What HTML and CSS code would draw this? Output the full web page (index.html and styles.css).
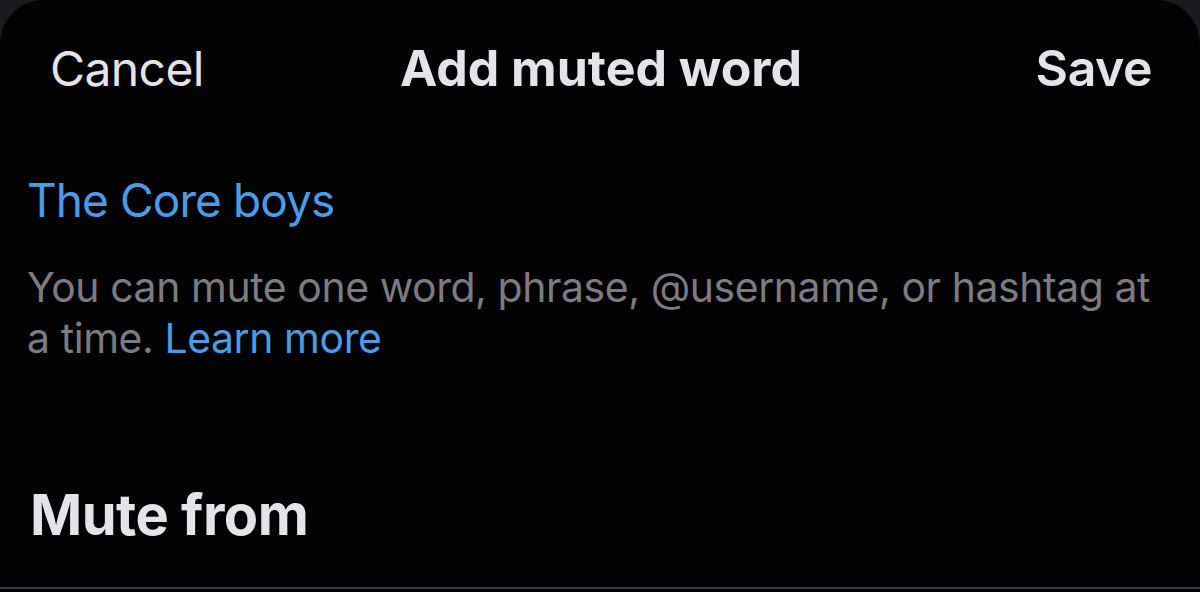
FILE: index.html
```html
<!DOCTYPE html>
<html>
<head>
<meta charset="utf-8">
<link rel="stylesheet" href="styles.css">
</head>
<body>
<div class="sheet">
  <header class="nav">
    <span class="nav-btn cancel">Cancel</span>
    <span class="nav-title">Add muted word</span>
    <span class="nav-btn save">Save</span>
  </header>
  <div class="field">The Core boys</div>
  <p class="hint">You can mute one word, phrase, @username, or hashtag at a time. <span class="link">Learn more</span></p>
  <h2 class="section">Mute from</h2>
  <div class="divider"></div>
</div>
</body>
</html>
```
FILE: styles.css
```css
html, body {
  margin: 0;
  padding: 0;
  background: #1b1b1d;
  width: 1200px;
  height: 592px;
  overflow: hidden;
}
.sheet {
  background: #030304;
  border-radius: 44px 44px 0 0;
  height: 592px;
  font-family: Inter, "Noto Sans", sans-serif;
  color: #e4e4e6;
  display: flex;
  flex-direction: column;
}
.nav {
  display: grid;
  grid-template-columns: 1fr auto 1fr;
  align-items: baseline;
  padding: 38px 48px 0 50px;
  line-height: 60px;
  font-size: 50px;
}
.cancel { font-weight: 400; font-size: 48px; letter-spacing: -0.6px; justify-self: start; }
.nav-title { font-weight: 700; letter-spacing: 0; }
.save { font-weight: 600; letter-spacing: -0.5px; justify-self: end; }
.field {
  margin-top: 72px;
  padding: 0 28px 0 27px;
  font-size: 46px;
  line-height: 58px;
  color: #4a9be8;
  letter-spacing: -0.9px;
}
.hint {
  margin: 33px 0 0;
  padding: 0 40px 0 27px;
  font-size: 40.9px;
  line-height: 51px;
  color: #7b7b80;
  letter-spacing: -0.4px;
}
.link { color: #4a9be8; }
.section {
  margin: 118px 0 0;
  padding: 0 30px;
  font-size: 56px;
  line-height: 66px;
  font-weight: 700;
  letter-spacing: -0.5px;
  color: #e4e4e6;
}
.divider {
  margin-top: auto;
  margin-bottom: 3px;
  height: 2px;
  background: #38383c;
}
```
